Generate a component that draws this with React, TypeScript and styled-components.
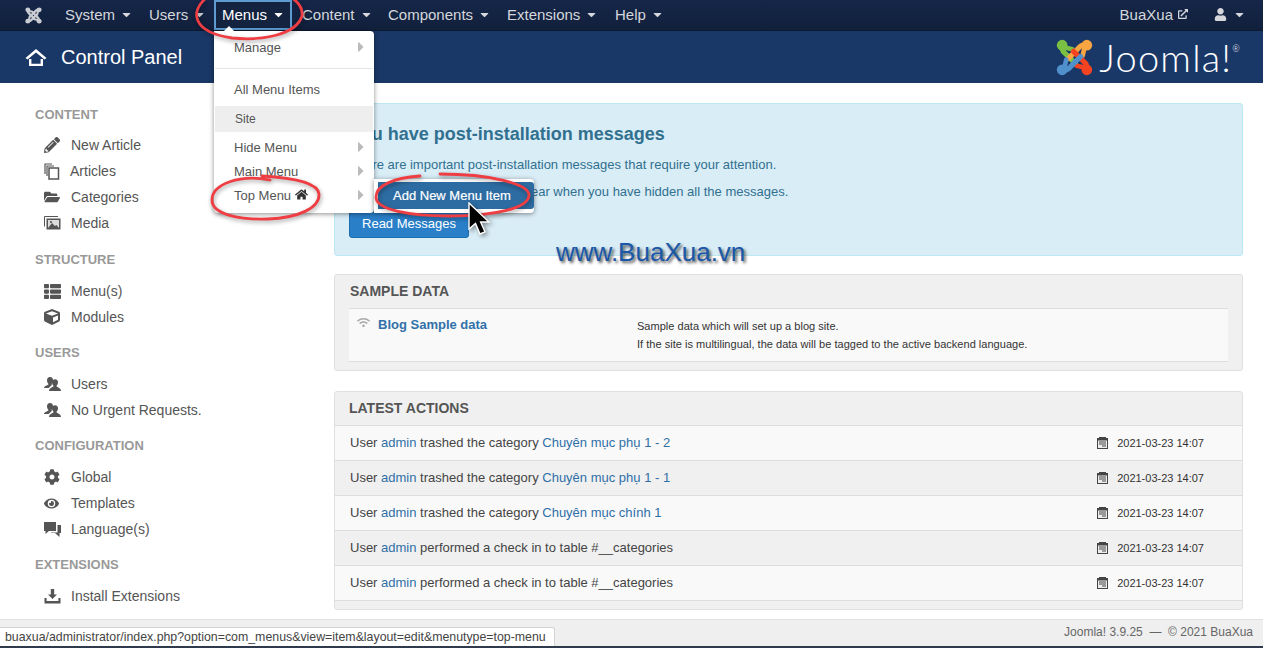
import React from "react";
import styled, { createGlobalStyle } from "styled-components";
import {
  FaCaretDown,
  FaCaretRight,
  FaCog,
  FaCube,
  FaExternalLinkAlt,
  FaEye,
  FaFolderOpen,
  FaHome,
  FaPencilAlt,
  FaThList,
  FaUser,
  FaWifi,
} from "react-icons/fa";

const GlobalStyle = createGlobalStyle`
  html, body {
    margin: 0;
    padding: 0;
    background: #fff;
  }
  body {
    font-family: "Liberation Sans", Arial, sans-serif;
    font-size: 13px;
    color: #555;
  }
  * { box-sizing: border-box; }
`;

const JoomlaMark = ({ size, mono }: { size: number; mono?: boolean }) => {
  const arms = mono
    ? ["#c9ccd2", "#c9ccd2", "#c9ccd2", "#c9ccd2"]
    : ["#7ac143", "#f9a541", "#f44321", "#5091cd"];
  return (
    <svg width={size} height={size} viewBox="0 0 36 36">
      {arms.map((color, i) => (
        <g key={i} transform={`rotate(${i * 90} 18 18)`}>
          <path
            d="M6 7 C5 12 9 14 12 17 L19 24"
            fill="none"
            stroke={color}
            strokeWidth={5}
            strokeLinecap="round"
          />
          <path d="M7 8 L16 10" fill="none" stroke={color} strokeWidth={4.5} strokeLinecap="round" />
          <circle cx={6} cy={6} r={5.2} fill={color} />
        </g>
      ))}
    </svg>
  );
};

const OutlineHome = () => (
  <svg width="22" height="19" viewBox="0 0 22 19">
    <path d="M0.5 10 L11 1 L21.5 10 L19.5 11.6 L11 4.4 L2.5 11.6 Z" fill="#fff" />
    <path d="M4 11 V18 H18 V11 H15.6 V15.8 H6.4 V11 Z" fill="#fff" />
  </svg>
);

const CopyIcon = () => (
  <svg width="16" height="17" viewBox="0 0 16 17" fill="none" stroke="#555" strokeWidth="1.2">
    <path d="M1 11 V1 H8 M3 13 V3 H10" />
    <rect x="5" y="5" width="9.5" height="11" fill="#fff" strokeWidth="1.5" />
  </svg>
);

const MediaIcon = () => (
  <svg width="17" height="14" viewBox="0 0 17 14">
    <path d="M0.5 10.5 V0.5 H14" fill="none" stroke="#555" strokeWidth="1" />
    <rect x="2.5" y="2.5" width="14" height="11" fill="#555" />
    <rect x="4" y="4" width="11" height="8" fill="#ddd" />
    <path d="M4 12 L8 7 L11 10 L12.5 9 L15 12 Z" fill="#555" />
    <circle cx="7" cy="6" r="1.1" fill="#555" />
  </svg>
);

const UsersIcon = () => (
  <svg width="17" height="16" viewBox="0 0 17 16" fill="#555">
    <path d="M6 1 C8.2 1 9 2.6 9 4.2 C9 6 8.2 7 7.6 7.8 L7.8 9 L4.6 12 H0 C0 9.8 3.8 9.2 4.4 8.4 L4.4 7.8 C3.6 7 3 5.8 3 4.2 C3 2.4 4 1 6 1 Z" />
    <path d="M11 3.2 C13 3.2 14 4.6 14 6.2 C14 7.8 13.4 8.8 12.6 9.6 V10.6 C13.4 11.4 17 12 17 15 H5 C5 12 8.6 11.4 9.4 10.6 V9.6 C8.6 8.8 8 7.8 8 6.2 C8 4.6 9 3.2 11 3.2 Z" />
  </svg>
);

const BubblesIcon = () => (
  <svg width="17" height="17" viewBox="0 0 17 17">
    <path d="M0 1 H12 V10 H5 L1.5 13 V10 H0 Z" fill="#555" />
    <path d="M13.5 4 H17 V12 H15.5 V16 L11 12 H7 V11.5 H13.5 Z" fill="#555" />
  </svg>
);

const TrayIcon = () => (
  <svg width="17" height="16" viewBox="0 0 17 16" fill="#555">
    <path d="M6.8 1 H10.2 V6.5 H13 L8.5 11 L4 6.5 H6.8 Z" />
    <path d="M0.5 10 H2.6 V13 H14.4 V10 H16.5 V15.5 H0.5 Z" />
  </svg>
);

const CalendarIcon = () => (
  <svg width="11" height="12" viewBox="0 0 11 12">
    <rect x="0" y="1" width="11" height="11" fill="#444" />
    <rect x="2" y="0" width="7" height="1" fill="#444" />
    <rect x="1" y="3.5" width="9" height="7.5" fill="#eee" />
    <path d="M2 5 H9 M2 7 H9 M5 9 H9" stroke="#444" strokeWidth="1" />
  </svg>
);

const Ring = ({ d }: { d: string }) => (
  <path d={d} fill="none" stroke="#ee3d43" strokeWidth="2.8" strokeLinecap="round" />
);

const navItems = [
  { label: "System", width: 84 },
  { label: "Users", width: 75 },
  { label: "Menus", width: 78, active: true },
  { label: "Content", width: 86 },
  { label: "Components", width: 119 },
  { label: "Extensions", width: 108 },
  { label: "Help", width: 65 },
];

const sidebar = [
  {
    title: "CONTENT",
    items: [
      { label: "New Article", icon: <FaPencilAlt size={16} /> },
      { label: "Articles", icon: <CopyIcon />, tight: true },
      { label: "Categories", icon: <FaFolderOpen size={16} /> },
      { label: "Media", icon: <MediaIcon /> },
    ],
  },
  {
    title: "STRUCTURE",
    items: [
      { label: "Menu(s)", icon: <FaThList size={17} /> },
      { label: "Modules", icon: <FaCube size={16} /> },
    ],
  },
  {
    title: "USERS",
    items: [
      { label: "Users", icon: <UsersIcon /> },
      { label: "No Urgent Requests.", icon: <UsersIcon /> },
    ],
  },
  {
    title: "CONFIGURATION",
    items: [
      { label: "Global", icon: <FaCog size={16} /> },
      { label: "Templates", icon: <FaEye size={15} /> },
      { label: "Language(s)", icon: <BubblesIcon /> },
    ],
  },
  {
    title: "EXTENSIONS",
    items: [{ label: "Install Extensions", icon: <TrayIcon /> }],
  },
];

const actions = [
  { text: "trashed the category", link: "Chuyên mục phụ 1 - 2" },
  { text: "trashed the category", link: "Chuyên mục phụ 1 - 1" },
  { text: "trashed the category", link: "Chuyên mục chính 1" },
  { text: "performed a check in to table #__categories" },
  { text: "performed a check in to table #__categories" },
];

export default function App() {
  return (
    <Page>
      <GlobalStyle />
      <NavBar>
        <NavLogo>
          <JoomlaMark size={17} mono />
        </NavLogo>
        {navItems.map((item) => (
          <NavItem key={item.label} $width={item.width} $active={item.active}>
            {item.label}
            <FaCaretDown size={13} />
          </NavItem>
        ))}
        <NavRight>
          <SiteLink>
            BuaXua
            <FaExternalLinkAlt size={10} />
          </SiteLink>
          <UserMenu>
            <FaUser size={13} />
            <FaCaretDown size={13} />
          </UserMenu>
        </NavRight>
      </NavBar>

      <Header>
        <PageTitle>
          <OutlineHome />
          Control Panel
        </PageTitle>
        <Brand>
          <JoomlaMark size={37} />
          <BrandName>
            Joomla!<sup>®</sup>
          </BrandName>
        </Brand>
      </Header>

      <Body>
        <Sidebar>
          {sidebar.map((section) => (
            <Section key={section.title}>
              <SectionTitle>{section.title}</SectionTitle>
              {section.items.map((item) => (
                <SideRow key={item.label}>
                  <SideIcon $tight={item.tight}>{item.icon}</SideIcon>
                  {item.label}
                </SideRow>
              ))}
            </Section>
          ))}
        </Sidebar>

        <Main>
          <Alert>
            <AlertTitle>You have post-installation messages</AlertTitle>
            <AlertText>There are important post-installation messages that require your attention.</AlertText>
            <AlertText>This information area won't appear when you have hidden all the messages.</AlertText>
            <ReadButton>Read Messages</ReadButton>
          </Alert>

          <SamplePanel>
            <PanelTitle>SAMPLE DATA</PanelTitle>
            <SampleRow>
              <SampleName>
                <FaWifi size={13} color="#a9a9a9" />
                <a>Blog Sample data</a>
              </SampleName>
              <SampleText>
                Sample data which will set up a blog site.
                <br />
                If the site is multilingual, the data will be tagged to the active backend language.
              </SampleText>
            </SampleRow>
          </SamplePanel>

          <ActionsPanel>
            <ActionsTitle>LATEST ACTIONS</ActionsTitle>
            {actions.map((action, i) => (
              <ActionRow key={i} $odd={i % 2 === 1}>
                <span>
                  User <a>admin</a> {action.text} {action.link && <a>{action.link}</a>}
                </span>
                <ActionDate>
                  <CalendarIcon />
                  2021-03-23 14:07
                </ActionDate>
              </ActionRow>
            ))}
            <ActionsEnd />
          </ActionsPanel>
        </Main>
      </Body>

      <Footer>
        Joomla! 3.9.25 &nbsp;— &nbsp;© 2021 BuaXua
        <StatusTip>buaxua/administrator/index.php?option=com_menus&amp;view=item&amp;layout=edit&amp;menutype=top-menu</StatusTip>
      </Footer>

      <Dropdown>
        <MenuEntry>
          Manage
          <MenuArrow />
        </MenuEntry>
        <MenuDivider />
        <MenuEntry>All Menu Items</MenuEntry>
        <MenuHeader>Site</MenuHeader>
        <MenuEntry>
          Hide Menu
          <MenuArrow />
        </MenuEntry>
        <MenuEntry>
          Main Menu
          <MenuArrow />
        </MenuEntry>
        <MenuEntry>
          <TopMenuLabel>
            Top Menu <FaHome size={13} color="#333" />
          </TopMenuLabel>
          <MenuArrow />
        </MenuEntry>
      </Dropdown>
      <DropNotch />

      <Submenu>
        <SubmenuItem>Add New Menu Item</SubmenuItem>
      </Submenu>

      <Rings width="1263" height="648" viewBox="0 0 1263 648">
        <Ring d="M206 -2 C190 12 192 32 232 38 C262 41 296 35 302 16 C303 8 298 2 292 -2" />
        <Ring d="M270 180 C240 174 212 184 212 200 C212 214 238 220 268 219 C298 218 320 208 319 194 C318 184 298 178 262 176" />
        <Ring d="M420 176 C392 178 376 186 376 197 C376 210 410 216 450 216 C495 216 529 208 529 195 C529 184 490 174 440 174" />
      </Rings>

      <Cursor width="26" height="36" viewBox="0 0 26 36">
        <path d="M2 1 V27 L8.5 21.5 L13 32 L18 29.8 L13.6 20 H22 Z" fill="#000" stroke="#fff" strokeWidth="1.4" />
      </Cursor>

      <Watermark>www.BuaXua.vn</Watermark>
    </Page>
  );
}

const Page = styled.div`
  position: relative;
  display: flex;
  flex-direction: column;
  width: 1263px;
  height: 648px;
  overflow: hidden;
`;

const NavBar = styled.nav`
  display: flex;
  align-items: center;
  flex: 0 0 31px;
  padding-left: 25px;
  background: linear-gradient(#15264a, #11203b);
  border-bottom: 1px solid #0c1a30;
  font-size: 15px;
  color: #d5d7dc;
`;

const NavLogo = styled.div`
  display: flex;
  width: 30px;
`;

const NavItem = styled.div<{ $width: number; $active?: boolean }>`
  display: flex;
  align-items: center;
  gap: 5px;
  flex: 0 0 ${({ $width }) => $width}px;
  height: 30px;
  padding: 0 0 2px ${({ $active }) => ($active ? 6 : 10)}px;
  color: ${({ $active }) => ($active ? "#fff" : "inherit")};
  border: ${({ $active }) => ($active ? "2px solid #5d9bd0" : "0")};
  background: ${({ $active }) => ($active ? "#14233f" : "transparent")};
`;

const NavRight = styled.div`
  display: flex;
  align-items: center;
  margin-left: auto;
  padding: 0 17px 2px 0;
`;

const SiteLink = styled.div`
  display: flex;
  align-items: center;
  gap: 5px;
`;

const UserMenu = styled.div`
  display: flex;
  align-items: center;
  gap: 6px;
  margin-left: 26px;
`;

const Header = styled.header`
  display: flex;
  align-items: center;
  justify-content: space-between;
  flex: 0 0 52px;
  padding: 0 22px 0 25px;
  background: #1a3867;
`;

const PageTitle = styled.h1`
  display: flex;
  align-items: center;
  gap: 14px;
  margin: 0;
  font-size: 20px;
  font-weight: 400;
  color: #fff;
`;

const Brand = styled.div`
  display: flex;
  align-items: center;
  gap: 6px;
`;

const BrandName = styled.div`
  font-family: Lato, "Liberation Sans", sans-serif;
  font-size: 38px;
  font-weight: 300;
  line-height: 38px;
  letter-spacing: 1.2px;
  color: #fff;

  sup {
    font-size: 9px;
    vertical-align: top;
    line-height: 22px;
  }
`;

const Body = styled.div`
  display: flex;
  flex: 0 0 536px;
  overflow: hidden;
`;

const Sidebar = styled.aside`
  flex: 0 0 334px;
  padding: 21px 0 0 35px;
`;

const SectionTitle = styled.h4`
  margin: 0 0 7px;
  font-size: 13px;
  line-height: 22px;
  font-weight: 700;
  color: #999;
`;

const Section = styled.section`
  margin-bottom: 12px;

  &:first-child {
    margin-bottom: 13px;
  }
  &:first-child ${SectionTitle} {
    margin-bottom: 6px;
  }
`;

const SideRow = styled.div`
  display: flex;
  align-items: center;
  height: 26px;
  padding-left: 9px;
  font-size: 14px;
  color: #555;
`;

const SideIcon = styled.span<{ $tight?: boolean }>`
  display: flex;
  align-items: center;
  width: ${({ $tight }) => ($tight ? 26 : 27)}px;
  color: #555;
`;

const Main = styled.main`
  flex: 1;
  padding: 20px 20px 0 0;
`;

const Alert = styled.div`
  height: 153px;
  margin-bottom: 18px;
  padding: 19px 16px 0 15px;
  background: #d9edf7;
  border: 1px solid #bce8f1;
  border-radius: 3px;
  color: #31708f;
`;

const AlertTitle = styled.h3`
  margin: 0 0 11px;
  font-size: 18px;
  line-height: 22px;
  font-weight: 700;
`;

const AlertText = styled.p`
  margin: 0 0 8px;
  font-size: 13px;
  line-height: 18px;
  & + & {
    margin-top: 9px;
  }
`;

const ReadButton = styled.button`
  display: block;
  width: 120px;
  height: 29px;
  margin: 0 0 0 -1px;
  padding: 0;
  background: #2a7fc9;
  border: 1px solid #1d6cb0;
  border-radius: 3px;
  font: 13px "Liberation Sans", Arial, sans-serif;
  color: #fff;
`;

const SamplePanel = styled.div`
  height: 97px;
  margin-bottom: 20px;
  padding: 0 14px;
  background: #f0f0f0;
  border: 1px solid #e0e0e0;
  border-radius: 3px;
`;

const PanelTitle = styled.h4`
  display: flex;
  align-items: center;
  height: 33px;
  margin: 0;
  padding: 0 0 2px 1px;
  font-size: 14px;
  font-weight: 700;
  color: #555;
`;

const SampleRow = styled.div`
  display: flex;
  height: 54px;
  background: #f9f9f9;
  border-top: 1px solid #ddd;
  border-bottom: 1px solid #ddd;
`;

const SampleName = styled.div`
  display: flex;
  align-items: flex-start;
  gap: 8px;
  flex: 0 0 288px;
  padding: 7px 0 0 8px;
  font-size: 13px;
  line-height: 18px;
  font-weight: 700;

  a {
    color: #3071a9;
  }
`;

const SampleText = styled.div`
  padding-top: 8px;
  font-size: 11px;
  line-height: 18px;
  letter-spacing: 0.025px;
  color: #333;
`;

const ActionsPanel = styled.div`
  height: 219px;
  background: #f0f0f0;
  border: 1px solid #e0e0e0;
  border-radius: 3px;
  overflow: hidden;
`;

const ActionsTitle = styled.h4`
  display: flex;
  align-items: center;
  height: 33px;
  margin: 0;
  padding: 0 0 1px 14px;
  font-size: 14px;
  font-weight: 700;
  color: #555;
`;

const ActionRow = styled.div<{ $odd: boolean }>`
  display: flex;
  align-items: center;
  justify-content: space-between;
  height: 35px;
  padding: 0 38px 1px 15px;
  background: ${({ $odd }) => ($odd ? "#f0f0f0" : "#f9f9f9")};
  border-top: 1px solid #ddd;
  font-size: 13px;
  color: #444;

  a {
    color: #2f6fa7;
  }
`;

const ActionDate = styled.span`
  display: flex;
  align-items: center;
  gap: 9px;
  font-size: 11px;
  color: #333;
`;

const ActionsEnd = styled.div`
  border-top: 1px solid #ddd;
`;

const Footer = styled.footer`
  position: relative;
  display: flex;
  align-items: center;
  justify-content: flex-end;
  flex: 0 0 29px;
  padding: 0 10px 2px 0;
  background: #efefef;
  border-top: 1px solid #e0e0e0;
  border-bottom: 2px solid #2f3a4c;
  font-size: 12px;
  color: #666;
`;

const StatusTip = styled.div`
  position: absolute;
  left: 0;
  bottom: 0;
  width: 555px;
  height: 19px;
  padding-left: 5px;
  background: #fff;
  border: 1px solid #d4d4d4;
  border-left: 0;
  border-bottom: 0;
  border-radius: 0 3px 0 0;
  font-size: 12.35px;
  line-height: 18px;
  white-space: nowrap;
  color: #444;
`;

const Dropdown = styled.div`
  position: absolute;
  top: 31px;
  left: 214px;
  width: 160px;
  height: 182px;
  padding: 4px 1px 0;
  background: #fff;
  border-radius: 0 4px 4px 4px;
  box-shadow: 0 1px 5px rgba(0, 0, 0, 0.45);
`;

const DropNotch = styled.div`
  position: absolute;
  top: 26px;
  left: 223px;
  width: 0;
  height: 0;
  border-left: 6px solid transparent;
  border-right: 6px solid transparent;
  border-bottom: 6px solid #fff;
`;

const MenuEntry = styled.div`
  display: flex;
  align-items: center;
  justify-content: space-between;
  height: 24px;
  padding: 0 4px 0 19px;
  font-size: 13px;
  color: #555;
`;

const TopMenuLabel = styled.span`
  svg {
    vertical-align: -1px;
  }
`;

const MenuArrow = styled(FaCaretRight).attrs({ size: 16, color: "#bbb" })``;

const MenuDivider = styled.div`
  height: 1px;
  margin: 9px 0 8px;
  background: #e5e5e5;
`;

const MenuHeader = styled.div`
  display: flex;
  align-items: center;
  height: 26px;
  margin: 5px 0 3px;
  padding-left: 20px;
  background: #eee;
  font-size: 12px;
  color: #555;
`;

const Submenu = styled.div`
  position: absolute;
  top: 179px;
  left: 374px;
  width: 160px;
  height: 34px;
  padding: 3px 0 4px 4px;
  background: #fff;
  border-radius: 0 4px 4px 0;
  box-shadow: 0 1px 5px rgba(0, 0, 0, 0.45);
`;

const SubmenuItem = styled.div`
  display: flex;
  align-items: center;
  height: 100%;
  padding-left: 15px;
  background: #2d6ca2;
  border-radius: 0 3px 3px 0;
  font-size: 13px;
  color: #fff;
  -webkit-text-stroke: 0.2px #fff;
`;

const Rings = styled.svg`
  position: absolute;
  top: 0;
  left: 0;
  pointer-events: none;
  filter: drop-shadow(1px 2px 2px rgba(0, 0, 0, 0.35));
`;

const Cursor = styled.svg`
  position: absolute;
  top: 202px;
  left: 467px;
  filter: drop-shadow(2px 2px 2px rgba(0, 0, 0, 0.4));
`;

const Watermark = styled.div`
  position: absolute;
  top: 236px;
  left: 556px;
  font-size: 26px;
  line-height: 32px;
  color: #1b57a8;
  text-shadow: 2px 2px 3px rgba(0, 0, 0, 0.65);
`;
